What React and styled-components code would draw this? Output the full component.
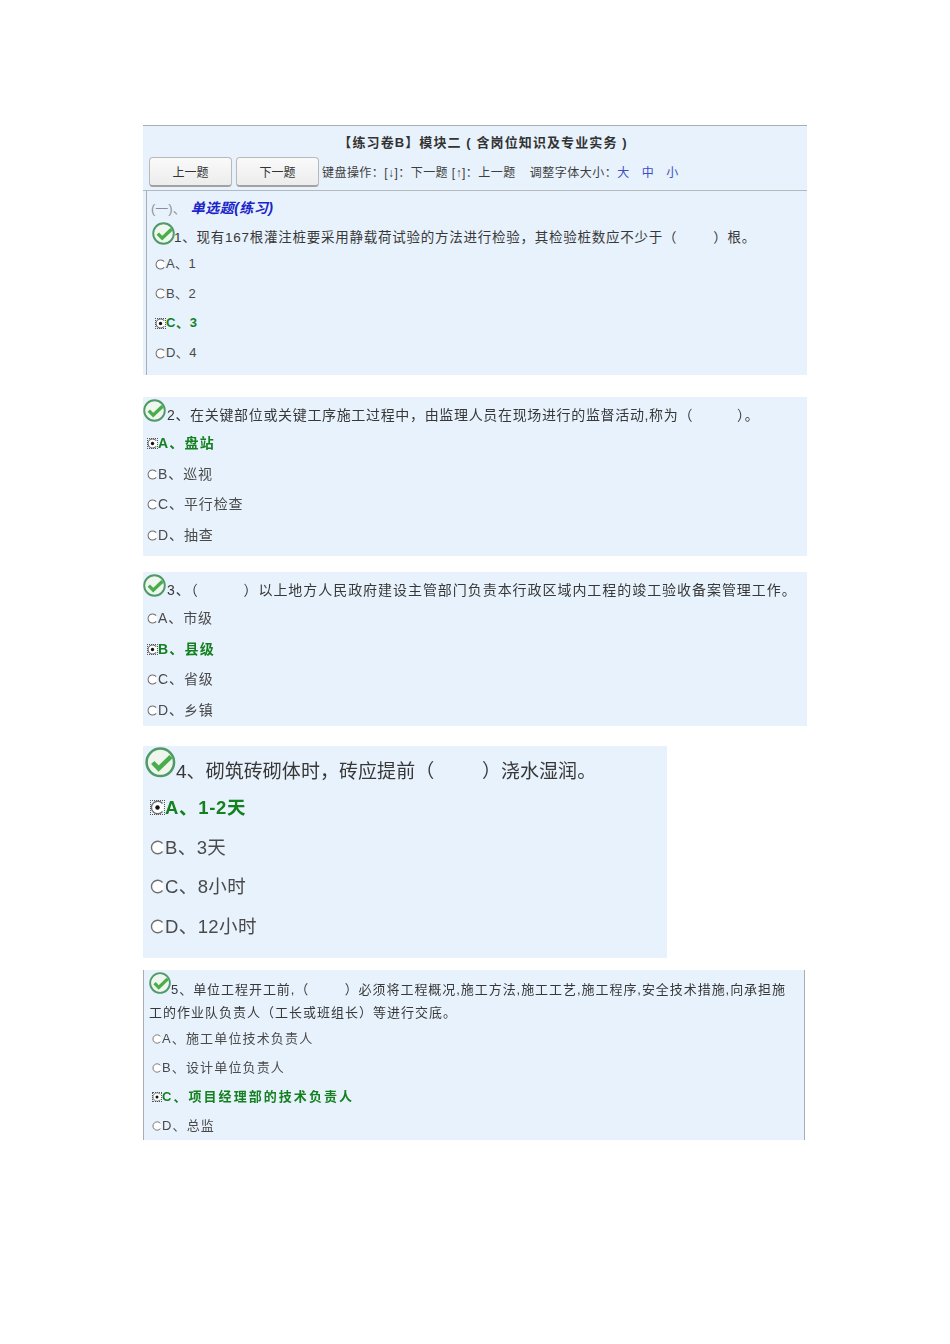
import React from "react";
import styled, { createGlobalStyle } from "styled-components";

const GlobalStyle = createGlobalStyle`
  html, body {
    margin: 0;
    padding: 0;
    background: #fff;
  }
  body {
    font-family: "Liberation Sans", "Noto Sans CJK SC", sans-serif;
    color: #3a3a3a;
  }
`;

const questions = [
  {
    no: "2",
    top: 22,
    height: 159,
    title: "、在关键部位或关键工序施工过程中，由监理人员在现场进行的监督活动,称为（　　　）。",
    spacing: 0.66,
    answer: 0,
    options: ["A、盘站", "B、巡视", "C、平行检查", "D、抽查"],
  },
  {
    no: "3",
    top: 16,
    height: 154,
    title: "、（　　　）以上地方人民政府建设主管部门负责本行政区域内工程的竣工验收备案管理工作。",
    spacing: 0.95,
    answer: 1,
    options: ["A、市级", "B、县级", "C、省级", "D、乡镇"],
  },
];

function Check({ size, lift, gap }) {
  return (
    <CheckSvg viewBox="0 0 24 24" $size={size} $lift={lift} $gap={gap}>
      <circle cx="11.5" cy="11.5" r="10.3" fill="#eef6ee" stroke="#4f9a68" strokeWidth="1.9" />
      <path d="M5.8 11.6 L10.2 16.2 L19.5 7.2" fill="none" stroke="#49ad4c" strokeWidth="3.4" />
    </CheckSvg>
  );
}

function Radio({ checked, size }) {
  return (
    <RadioBox $size={size} $checked={checked}>
      <svg viewBox="0 0 12 12" width="100%" height="100%">
        <circle cx="6" cy="6" r="5" fill="#fff" />
        <path d="M10 2.8 A5 5 0 1 0 10 9.2" fill="none" stroke="#6f6f6f" strokeWidth="1.1" />
        {checked && <circle cx="6" cy="6" r="1.8" fill="#111" />}
      </svg>
    </RadioBox>
  );
}

function Option({ text, checked, size, height, spacing, radioSize }) {
  return (
    <OptionRow $height={height} $size={size} $spacing={spacing} $checked={checked}>
      <Radio checked={checked} size={radioSize} />
      {text}
    </OptionRow>
  );
}

function App() {
  return (
    <>
      <GlobalStyle />
      <Page>
        <FirstPanel>
          <PaperTitle>【练习卷B】模块二 ( 含岗位知识及专业实务 )</PaperTitle>
          <Toolbar>
            <NavButton>上一题</NavButton>
            <NavButton>下一题</NavButton>
            <Hint>键盘操作：[↓]：下一题 [↑]：上一题</Hint>
            <Hint $wide>调整字体大小：</Hint>
            <SizeLink>大</SizeLink>
            <SizeLink>中</SizeLink>
            <SizeLink>小</SizeLink>
          </Toolbar>
          <FirstBody>
            <SectionLine>
              (一)、<SectionName>单选题(练习)</SectionName>
            </SectionLine>
            <QuestionTitle $height={28} $size={13.5} $spacing={0.75} $indent={5}>
              <Check size={24} gap={-2} />
              <span>1、现有167根灌注桩要采用静载荷试验的方法进行检验，其检验桩数应不少于（　　&ensp;）根。</span>
            </QuestionTitle>
            <Options $pad={8} $top={1}>
              <Option text="A、1" size={13} height={29.6} radioSize={11} />
              <Option text="B、2" size={13} height={29.6} radioSize={11} />
              <Option text="C、3" size={13} height={29.6} radioSize={11} checked />
              <Option text="D、4" size={13} height={29.6} radioSize={11} />
            </Options>
          </FirstBody>
        </FirstPanel>

        {questions.map((q) => (
          <Panel key={q.no} $top={q.top} $height={q.height}>
            <QuestionTitle $height={29.5} $size={14} $spacing={q.spacing} $lift={2.5}>
              <Check size={24} />
              <span>
                {q.no}
                {q.title}
              </span>
            </QuestionTitle>
            <Options $pad={4}>
              {q.options.map((o, i) => (
                <Option
                  key={o}
                  text={o}
                  size={14}
                  height={30.7}
                  spacing={0.9}
                  radioSize={11}
                  checked={i === q.answer}
                />
              ))}
            </Options>
          </Panel>
        ))}

        <Panel $top={20} $height={212} $width={524}>
          <QuestionTitle $height={40} $size={19} $spacing={0.05} $indent={2} $lift={1}>
            <Check size={32} lift={5} gap={-1} />
            <span>4、砌筑砖砌体时，砖应提前（　　&ensp;）浇水湿润。</span>
          </QuestionTitle>
          <Options $pad={7}>
            <Option text="A、1-2天" size={18.5} height={39.7} radioSize={15} checked />
            <Option text="B、3天" size={18.5} height={39.7} radioSize={15} />
            <Option text="C、8小时" size={18.5} height={39.7} radioSize={15} />
            <Option text="D、12小时" size={18.5} height={39.7} radioSize={15} />
          </Options>
        </Panel>

        <LastPanel>
          <QuestionTitle $height={32} $size={13} $spacing={0.95} $indent={5} $lift={3}>
            <Check size={23} lift={3} gap={-1} />
            <span>5、单位工程开工前,（　　&ensp;）必须将工程概况,施工方法,施工工艺,施工程序,安全技术措施,向承担施</span>
          </QuestionTitle>
          <WrapLine>工的作业队负责人（工长或班组长）等进行交底。</WrapLine>
          <Options $pad={8}>
            <Option text="A、施工单位技术负责人" size={13} spacing={1.15} height={29} radioSize={10} />
            <Option text="B、设计单位负责人" size={13} spacing={1.15} height={29} radioSize={10} />
            <Option text="C、项目经理部的技术负责人" size={13} spacing={1.75} height={29} radioSize={10} checked />
            <Option text="D、总监" size={13} spacing={1.15} height={29} radioSize={10} />
          </Options>
        </LastPanel>
      </Page>
    </>
  );
}

export default App;

const Page = styled.div`
  box-sizing: border-box;
  width: 950px;
  height: 1344px;
  padding: 125px 0 0 143px;
  overflow: hidden;
  filter: blur(0.35px);
`;

const Panel = styled.div`
  box-sizing: border-box;
  width: ${(props) => props.$width || 664}px;
  height: ${(props) => props.$height}px;
  margin-top: ${(props) => props.$top}px;
  background: #e8f2fc;
`;

const FirstPanel = styled.div`
  box-sizing: border-box;
  width: 664px;
  height: 250px;
  background: #e8f2fc;
  border-top: 1px solid #a9aeb3;
`;

const LastPanel = styled(Panel).attrs({ $top: 12, $height: 170, $width: 662 })`
  border-left: 1px solid #a7adb3;
  border-right: 1px solid #a7adb3;
`;

const PaperTitle = styled.div`
  height: 31px;
  padding-left: 16px;
  line-height: 34px;
  text-align: center;
  font-size: 13px;
  font-weight: 700;
  letter-spacing: 1.1px;
  color: #333;
`;

const Toolbar = styled.div`
  box-sizing: border-box;
  display: flex;
  align-items: center;
  height: 34px;
  padding: 0 0 4px 6px;
  border-bottom: 1px solid #b4b9bd;
  font-size: 12px;
`;

const NavButton = styled.div`
  box-sizing: border-box;
  align-self: flex-start;
  width: 83px;
  height: 30px;
  margin-right: 4px;
  display: flex;
  align-items: center;
  justify-content: center;
  border: 1px solid #b9b9b9;
  border-bottom: 2px solid #a2a2a2;
  border-radius: 4px;
  background: linear-gradient(#fafafa, #ececec);
  font-size: 12px;
  color: #333;
`;

const Hint = styled.span`
  margin-left: ${(props) => (props.$wide ? 14 : -1)}px;
  white-space: pre;
  color: #3d3d3d;
  letter-spacing: ${(props) => (props.$wide ? 0.5 : 0.45)}px;
`;

const SizeLink = styled.span`
  width: 24.5px;
  font-size: 12px;
  color: #3d4fc0;
`;

const FirstBody = styled.div`
  box-sizing: border-box;
  height: 184px;
  margin-left: 3px;
  padding: 8px 0 0 0;
  border-left: 1px solid #a9aeb3;
`;

const SectionLine = styled.div`
  height: 20px;
  padding-left: 4px;
  line-height: 19px;
  font-size: 13px;
  color: #8a8f96;
`;

const SectionName = styled.span`
  margin-left: 5px;
  font-size: 14px;
  font-style: italic;
  font-weight: 700;
  letter-spacing: 0.5px;
  color: #1a24c8;
`;

const QuestionTitle = styled.div`
  display: flex;
  align-items: flex-end;
  height: ${(props) => props.$height}px;
  padding: 0 0 ${(props) => props.$lift || 0}px ${(props) => props.$indent || 0}px;
  box-sizing: border-box;
  font-size: ${(props) => props.$size}px;
  letter-spacing: ${(props) => props.$spacing}px;
  white-space: nowrap;
  color: #383838;

  span {
    line-height: 1.3;
  }
`;

const CheckSvg = styled.svg`
  flex: none;
  width: ${(props) => props.$size}px;
  height: ${(props) => props.$size}px;
  margin-bottom: ${(props) => (props.$lift || 0) + 1}px;
  margin-right: ${(props) => props.$gap || 0}px;
`;

const WrapLine = styled.div`
  height: 21px;
  padding-left: 5px;
  line-height: 21px;
  font-size: 13px;
  letter-spacing: 1px;
  white-space: nowrap;
  color: #383838;
`;

const Options = styled.div`
  display: flex;
  flex-direction: column;
  padding-left: ${(props) => props.$pad}px;
  margin-top: ${(props) => props.$top || 0}px;
`;

const OptionRow = styled.div`
  display: flex;
  align-items: center;
  height: ${(props) => props.$height}px;
  font-size: ${(props) => props.$size}px;
  letter-spacing: ${(props) => (props.$spacing || 0.4) + (props.$checked ? 0.3 : 0)}px;
  white-space: nowrap;
  color: ${(props) => (props.$checked ? "#14801f" : "#4a4a4a")};
  font-weight: ${(props) => (props.$checked ? 700 : 400)};
`;

const RadioBox = styled.span`
  flex: none;
  box-sizing: border-box;
  width: ${(props) => props.$size}px;
  height: ${(props) => props.$size}px;
  margin-top: 3px;
  outline: ${(props) => (props.$checked ? "1px dotted #555" : "none")};
  outline-offset: -1px;

  svg {
    display: block;
  }
`;
